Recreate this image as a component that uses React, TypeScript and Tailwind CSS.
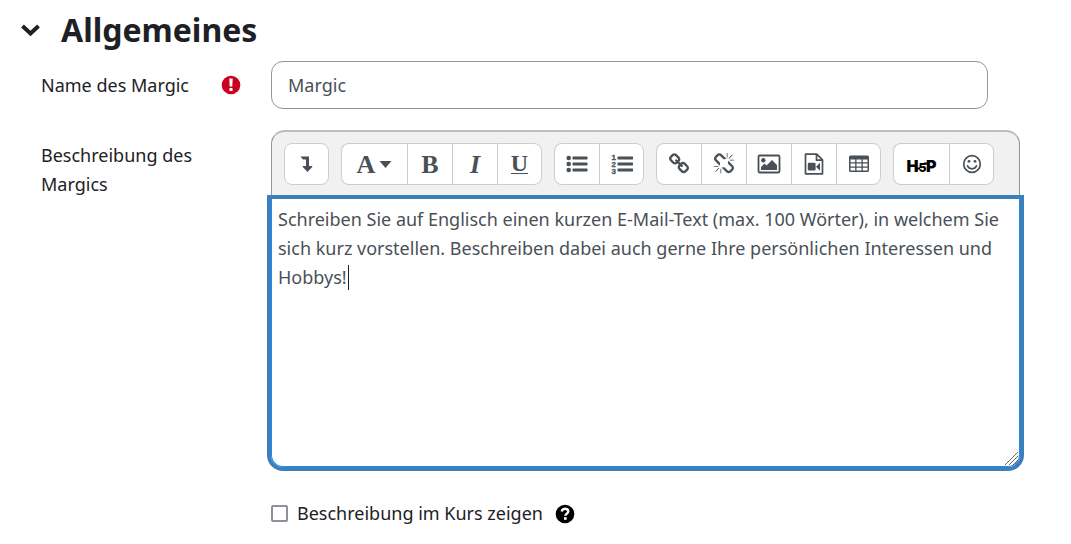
import React from "react";
import { clsx } from "clsx";

const DESCRIPTION =
  "Schreiben Sie auf Englisch einen kurzen E-Mail-Text (max. 100 Wörter), in welchem Sie sich kurz vorstellen. Beschreiben dabei auch gerne Ihre persönlichen Interessen und Hobbys!";

interface IconProps {
  className?: string;
  children: React.ReactNode;
  viewBox?: string;
}

const Icon = ({ className = "size-5", children, viewBox = "0 0 20 20" }: IconProps) => (
  <svg className={className} viewBox={viewBox} fill="currentColor" aria-hidden="true">
    {children}
  </svg>
);

const LevelDownIcon = () => (
  <Icon>
    <path d="M3.500 2.500h8.500v9.500h2.700c.6 0 .8.500.5.900l-4.200 4.500c-.3.300-.7.300-1 0l-4.200-4.500c-.3-.4-.1-.9.500-.9H9V5.500H6z" />
  </Icon>
);

const ListUlIcon = () => (
  <Icon className="h-5 w-[22px]" viewBox="0 0 22 20">
    <circle cx="2.700" cy="4" r="2.300" />
    <circle cx="2.700" cy="10" r="2.300" />
    <circle cx="2.700" cy="16" r="2.300" />
    <rect x="6.500" y="2.600" width="15" height="2.900" rx="0.400" />
    <rect x="6.500" y="8.600" width="15" height="2.900" rx="0.400" />
    <rect x="6.500" y="14.600" width="15" height="2.900" rx="0.400" />
  </Icon>
);

const ListOlIcon = () => (
  <Icon className="h-[22px] w-[22px]" viewBox="0 0 22 22">
    <text fontFamily="Liberation Sans" fontWeight="700" fontSize="8" stroke="currentColor" strokeWidth="0.300">
      <tspan x="0.500" y="7">1</tspan>
      <tspan x="0.500" y="14.200">2</tspan>
      <tspan x="0.500" y="21.400">3</tspan>
    </text>
    <rect x="6.500" y="3.600" width="15.500" height="2.900" rx="0.400" />
    <rect x="6.500" y="9.600" width="15.500" height="2.900" rx="0.400" />
    <rect x="6.500" y="15.600" width="15.500" height="2.900" rx="0.400" />
  </Icon>
);

const LinkIcon = () => (
  <Icon className="size-[22px]" viewBox="0 0 1792 1792">
    <path d="M1520 1216q0-40-28-68l-208-208q-28-28-68-28-42 0-72 32 3 3 19 18.500t21.500 21.500 15 19 13 25.500 3.500 27.500q0 40-28 68t-68 28q-15 0-27.500-3.500t-25.500-13-19-15-21.500-21.500-18.500-19q-33 31-33 73 0 40 28 68l206 207q27 27 68 27 40 0 68-26l147-146q28-28 28-67zm-703-705q0-40-28-68l-206-207q-28-28-68-28-39 0-68 27l-147 146q-28 28-28 67 0 40 28 68l208 208q27 27 68 27 42 0 72-31-3-3-19-18.500t-21.500-21.500-15-19-13-25.500-3.500-27.500q0-40 28-68t68-28q15 0 27.500 3.500t25.500 13 19 15 21.500 21.500 18.500 19q33-31 33-73zm895 705q0 120-85 203l-147 146q-83 83-203 83-121 0-204-85l-206-207q-83-83-83-203 0-123 88-209l-88-88q-86 88-208 88-120 0-204-84l-208-208q-84-84-84-204t85-203l147-146q83-83 203-83 121 0 204 85l206 207q83 83 83 203 0 123-88 209l88 88q86-88 208-88 120 0 204 84l208 208q84 84 84 204z" />
  </Icon>
);

const UnlinkIcon = () => (
  <Icon className="size-[22px]" viewBox="0 0 1792 1792">
    <path d="M503 1271l-256 256q-10 9-23 9-12 0-23-9-9-10-9-23t9-23l256-256q10-9 23-9t23 9q9 10 9 23t-9 23zm169 41v320q0 14-9 23t-23 9-23-9-9-23v-320q0-14 9-23t23-9 23 9 9 23zm-224-224q0 14-9 23t-23 9h-320q-14 0-23-9t-9-23 9-23 23-9h320q14 0 23 9t9 23zm1264 128q0 120-85 203l-147 146q-83 83-203 83-121 0-204-85l-334-335q-21-21-42-56l239-18 273 274q28 28 68 27.500t68-27.500l147-146q28-28 28-67 0-40-28-68l-274-275 18-239q35 21 56 42l336 336q84 86 84 204zm-617-724l-239 18-273-274q-28-28-68-28-39 0-68 27l-147 146q-28 28-28 67 0 40 28 68l274 274-18 240q-35-21-56-42l-336-336q-84-86-84-204 0-120 85-203l147-146q83-83 203-83 121 0 204 85l334 335q21 21 42 56zm633 84q0 14-9 23t-23 9h-320q-14 0-23-9t-9-23 9-23 23-9h320q14 0 23 9t9 23zm-544-544v320q0 14-9 23t-23 9-23-9-9-23v-320q0-14 9-23t23-9 23 9 9 23zm407 151l-256 256q-11 9-23 9t-23-9q-9-10-9-23t9-23l256-256q10-9 23-9t23 9q9 10 9 23t-9 23z" />
  </Icon>
);

const ImageIcon = () => (
  <Icon className="h-5 w-6" viewBox="0 0 24 20">
    <rect x="1.500" y="1.500" width="21" height="17" rx="1.200" fill="none" stroke="currentColor" strokeWidth="1.800" />
    <circle cx="6.300" cy="6.300" r="2.200" />
    <path d="M4 16v-3l3.500-3.500 2 2L15 6l5 5v5z" />
  </Icon>
);

const VideoIcon = () => (
  <Icon className="h-[22px] w-5" viewBox="0 0 20 22">
    <path d="M1.500 1.200h11.300l5.700 5.700v13.900h-17zM12.500 1.500v5.700h5.700" fill="none" stroke="currentColor" strokeWidth="1.700" strokeLinejoin="round" />
    <rect x="3.800" y="9.800" width="7.800" height="7.800" rx="1.300" />
    <path d="M12 13.700l4-4v8z" />
  </Icon>
);

const TableIcon = () => (
  <Icon className="h-[18px] w-5" viewBox="0 0 20 18">
    <path
      fillRule="evenodd"
      d="M1.500 0.500h17q1.500 0 1.500 1.500v13.500q0 1.500-1.500 1.500h-17q-1.500 0-1.500-1.500V2Q0 .5 1.500.5zM1.500 4.500v2.800h4.700V4.500zm6 0v2.800h5V4.500zm6.300 0v2.800h4.700V4.500zM1.500 8.600v2.800h4.700V8.600zm6 0v2.800h5V8.600zm6.300 0v2.800h4.700V8.600zM1.500 12.700v2.800h4.700v-2.800zm6 0v2.800h5v-2.800zm6.300 0v2.800h4.700v-2.800z"
    />
  </Icon>
);

const SmileIcon = () => (
  <Icon>
    <circle cx="10" cy="10" r="8.300" fill="none" stroke="currentColor" strokeWidth="1.700" />
    <circle cx="7" cy="7.300" r="1.400" />
    <circle cx="13" cy="7.300" r="1.400" />
    <path d="M5.500 11.800c1.500 4 7.500 4 9 0" fill="none" stroke="currentColor" strokeWidth="1.700" strokeLinecap="round" />
  </Icon>
);

const H5PLogo = () => (
  <Icon className="h-5 w-8 text-black" viewBox="0 0 32 20">
    <text y="17.500" fontFamily="Inter" fontWeight="900" fontSize="16">
      <tspan x="0.500">H</tspan>
      <tspan x="12.500" fontSize="12">5</tspan>
      <tspan x="20">P</tspan>
    </text>
    <path d="M11 14.500h3M18 9.500h4" stroke="currentColor" strokeWidth="1.800" />
  </Icon>
);

interface ToolButtonProps {
  label: string;
  width?: string;
  children: React.ReactNode;
}

const ToolButton = ({ label, width = "w-[45px]", children }: ToolButtonProps) => (
  <button
    type="button"
    aria-label={label}
    title={label}
    className={clsx(
      "flex h-[42px] items-center justify-center border-y border-l border-[#cbcdd0] bg-white text-[#495057]",
      "first:rounded-l-lg last:rounded-r-lg last:border-r",
      width
    )}
  >
    {children}
  </button>
);

const ToolGroup = ({ children }: { children: React.ReactNode }) => <div className="flex">{children}</div>;

const Toolbar = () => (
  <div className="flex flex-wrap gap-3 rounded-t-[14px] border border-t-2 border-b-0 border-[#8f959e] border-t-[#b9bec5] bg-[#f1f1f1] px-3 pt-[11px] pb-[14px]">
    <ToolGroup>
      <ToolButton label="Mehr Symbole anzeigen"><LevelDownIcon /></ToolButton>
    </ToolGroup>
    <ToolGroup>
      <ToolButton label="Absatzstil" width="w-[66px]">
        <span className="font-['Liberation_Serif'] text-[26px] font-bold">A</span>
        <Icon className="ml-1 h-[7px] w-[13px]" viewBox="0 0 12 7"><path d="M0 0h12L6 7z" /></Icon>
      </ToolButton>
      <ToolButton label="Fett"><span className="font-['Liberation_Serif'] text-[26px] font-bold">B</span></ToolButton>
      <ToolButton label="Kursiv"><span className="font-['Liberation_Serif'] text-[26px] font-bold italic">I</span></ToolButton>
      <ToolButton label="Unterstrichen">
        <span className="border-b border-current font-['Liberation_Serif'] text-2xl leading-[19px] font-bold">U</span>
      </ToolButton>
    </ToolGroup>
    <ToolGroup>
      <ToolButton label="Liste"><ListUlIcon /></ToolButton>
      <ToolButton label="Nummerierte Liste"><ListOlIcon /></ToolButton>
    </ToolGroup>
    <ToolGroup>
      <ToolButton label="Link"><LinkIcon /></ToolButton>
      <ToolButton label="Link entfernen"><UnlinkIcon /></ToolButton>
      <ToolButton label="Bild"><ImageIcon /></ToolButton>
      <ToolButton label="Medien"><VideoIcon /></ToolButton>
      <ToolButton label="Tabelle"><TableIcon /></ToolButton>
    </ToolGroup>
    <ToolGroup>
      <ToolButton label="H5P" width="w-14"><H5PLogo /></ToolButton>
      <ToolButton label="Emoji"><SmileIcon /></ToolButton>
    </ToolGroup>
  </div>
);

export default function App() {
  return (
    <main className="min-h-screen bg-white pr-[51px] pl-5 font-['Noto_Sans',sans-serif] text-lg leading-[29px] text-[#1d2125]">
      <h1 className="pt-2">
        <button type="button" aria-expanded="true" className="flex items-center gap-5 text-[32px] leading-[44px] font-bold">
          <Icon className="h-5 w-[21px]" viewBox="0 0 21 20">
            <path d="M2.500 6l8 7.500 8-7.500" fill="none" stroke="currentColor" strokeWidth="4" />
          </Icon>
          Allgemeines
        </button>
      </h1>

      <form className="pl-[21px]">
        <div className="mt-[9px] grid grid-cols-[230px_1fr] items-center">
          <div className="flex items-center justify-between pr-[30px]">
            <label htmlFor="name">Name des Margic</label>
            <Icon className="size-5 text-[#ca0120]">
              <circle cx="10" cy="10" r="9.300" />
              <path d="M8.300 3.600h3.400l-.4 8H8.700zM8.500 13.100h3v3h-3z" fill="white" />
            </Icon>
          </div>
          <div className="pr-8">
            <input
              id="name"
              type="text"
              defaultValue="Margic"
              className="h-12 w-full rounded-xl border border-[#8f959e] px-4 text-[#495057] outline-none"
            />
          </div>
        </div>

        <div className="mt-[21px] grid grid-cols-[230px_1fr]">
          <label htmlFor="description" className="w-40 pt-[11px]">Beschreibung des Margics</label>
          <div>
            <Toolbar />
            <div className="relative">
              <textarea
                id="description"
                defaultValue={DESCRIPTION}
                className="block h-[268px] w-full resize-none rounded-b-xl border border-t-0 border-[#1e8cf0] px-[6px] pt-[6px] text-[#495057] ring-4 ring-[#3d7fba] outline-none"
              />
              {/* text caret */}
              <span className="absolute top-[66px] left-[77px] h-[25px] w-px bg-[#1d2125]" />
              <svg className="absolute right-0 bottom-0 size-4" viewBox="0 0 16 16" stroke="#666" aria-hidden="true">
                <path d="M1 14L14 1M5 14l9-9M9 14l5-5M12 14l2-2" />
              </svg>
            </div>
          </div>
        </div>

        <div className="mt-8 ml-[230px] flex items-center">
          <input
            id="show"
            type="checkbox"
            className="mr-[9px] size-[17px] appearance-none rounded-xs border-2 border-[#8f8f9d] bg-white"
          />
          <label htmlFor="show">Beschreibung im Kurs zeigen</label>
          <button type="button" aria-label="Hilfe" className="ml-3 text-black">
            <Icon>
              <circle cx="10" cy="10" r="9.300" />
              <path d="M6.700 7.500C7 5.500 8.300 4.700 10 4.700c2 0 3.300 1.200 3.300 2.800 0 2-2.900 2.200-2.900 4.300" fill="none" stroke="white" strokeWidth="2.400" />
              <path d="M9 13.200h2.700v2.600H9z" fill="white" />
            </Icon>
          </button>
        </div>
      </form>
    </main>
  );
}
